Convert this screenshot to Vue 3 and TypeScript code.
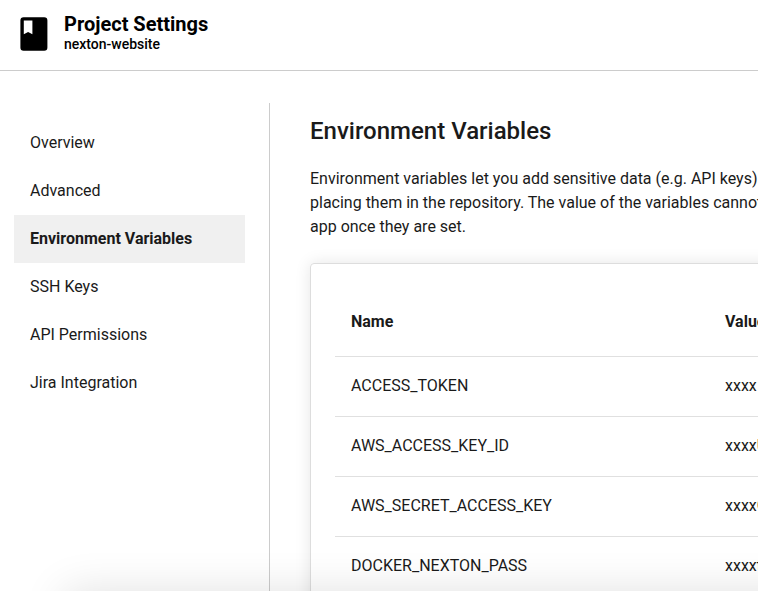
<script setup lang="ts">
interface NavItem {
  label: string
  href: string
}

interface Variable {
  name: string
  value: string
}

const projectName = 'nexton-website'
const current = 'Environment Variables'

const navItems: NavItem[] = [
  { label: 'Overview', href: '#overview' },
  { label: 'Advanced', href: '#advanced' },
  { label: 'Environment Variables', href: '#environment-variables' },
  { label: 'SSH Keys', href: '#ssh-keys' },
  { label: 'API Permissions', href: '#api-permissions' },
  { label: 'Jira Integration', href: '#jira-integration' },
]

const variables: Variable[] = [
  { name: 'ACCESS_TOKEN', value: 'xxxx' },
  { name: 'AWS_ACCESS_KEY_ID', value: 'xxxxU' },
  { name: 'AWS_SECRET_ACCESS_KEY', value: 'xxxxG' },
  { name: 'DOCKER_NEXTON_PASS', value: 'xxxxt' },
]
</script>

<template>
  <div class="app">
    <header class="header">
      <svg class="logo" viewBox="0 0 28 34" aria-hidden="true">
        <path
          fill="#000"
          fill-rule="evenodd"
          d="M3.6 .2H24.2A3.2 3.2 0 0 1 27.4 3.4V30.6A3.2 3.2 0 0 1 24.2 33.8H3.6A3.2 3.2 0 0 1 .4 30.6V3.4A3.2 3.2 0 0 1 3.6 .2ZM3.8 3.6V17.2L8.1 15L12.4 17.2V3.6Z"
        />
      </svg>
      <div class="titles">
        <h1 class="title">Project Settings</h1>
        <p class="project">{{ projectName }}</p>
      </div>
    </header>

    <div class="body">
      <nav class="sidebar" aria-label="Project settings">
        <a
          v-for="item in navItems"
          :key="item.href"
          class="nav-link"
          :class="{ active: item.label === current }"
          :href="item.href"
          :aria-current="item.label === current ? 'page' : undefined"
        >{{ item.label }}</a>
      </nav>

      <main class="content">
        <h2 class="heading">{{ current }}</h2>
        <p class="intro">
          Environment variables let you add sensitive data (e.g. API keys)<br />
          placing them in the repository. The value of the variables cannot<br />
          app once they are set.
        </p>
        <section class="card">
          <table class="table">
            <thead>
              <tr>
                <th class="name-cell" scope="col">Name</th>
                <th scope="col">Value</th>
              </tr>
            </thead>
            <tbody>
              <tr v-for="variable in variables" :key="variable.name">
                <td>{{ variable.name }}</td>
                <td>{{ variable.value }}</td>
              </tr>
            </tbody>
          </table>
        </section>
      </main>
    </div>
    <div class="bottom-shade"></div>
  </div>
</template>

<style>
body {
  background: #fff;
}
</style>

<style scoped>
.app {
  position: relative;
  display: flex;
  flex-direction: column;
  height: 100vh;
  overflow: hidden;
  font-family: Roboto, "Liberation Sans", sans-serif;
  font-size: 16px;
  line-height: 24px;
  color: #1a1a1a;
}

.header {
  display: flex;
  flex-shrink: 0;
  align-items: flex-start;
  gap: 16px;
  padding: 12px 20px 18px;
  border-bottom: 1px solid #ccc;
  color: #000;
}

.logo {
  width: 28px;
  height: 34px;
  margin-top: 5px;
}

.title {
  margin: 0;
  font-size: 20px;
  font-weight: 700;
  line-height: 24px;
}

.project {
  margin: 0;
  font-size: 14px;
  font-weight: 500;
  line-height: 16px;
}

.body {
  display: flex;
  flex: 1;
  min-height: 0;
  padding-top: 32px;
}

.sidebar {
  display: flex;
  flex: 0 0 231px;
  flex-direction: column;
  padding: 16px 24px 0 14px;
  border-right: 1px solid #ccc;
}

.nav-link {
  padding: 12px 16px;
  color: inherit;
  text-decoration: none;
}

.active {
  background: #f0f0f0;
  font-weight: 700;
}

.content {
  flex: 1;
  min-width: 0;
  padding: 12px 0 0 40px;
}

.heading {
  margin: 0;
  font-size: 24px;
  font-weight: 500;
  line-height: 32px;
}

.intro {
  margin: 20px 0 24px;
  white-space: nowrap;
}

.card {
  width: 150%;
  padding: 24px;
  border: 1px solid #ddd;
  border-radius: 4px;
  box-sizing: border-box;
  box-shadow: 0 0 16px rgba(0, 0, 0, 0.1);
}

.table {
  width: 100%;
  border-collapse: separate;
  border-spacing: 0;
  table-layout: fixed;
}

.table th,
.table td {
  padding: 17px 16px 18px;
  border-bottom: 1px solid #e0e0e0;
  text-align: left;
}

.table th {
  padding: 22px 16px;
  font-weight: 700;
}

.table .name-cell {
  width: 342px;
}

.bottom-shade {
  position: absolute;
  top: 100%;
  right: -80px;
  left: 64px;
  height: 80px;
  box-shadow: 0 0 44px rgba(0, 0, 0, 0.12);
}
</style>
